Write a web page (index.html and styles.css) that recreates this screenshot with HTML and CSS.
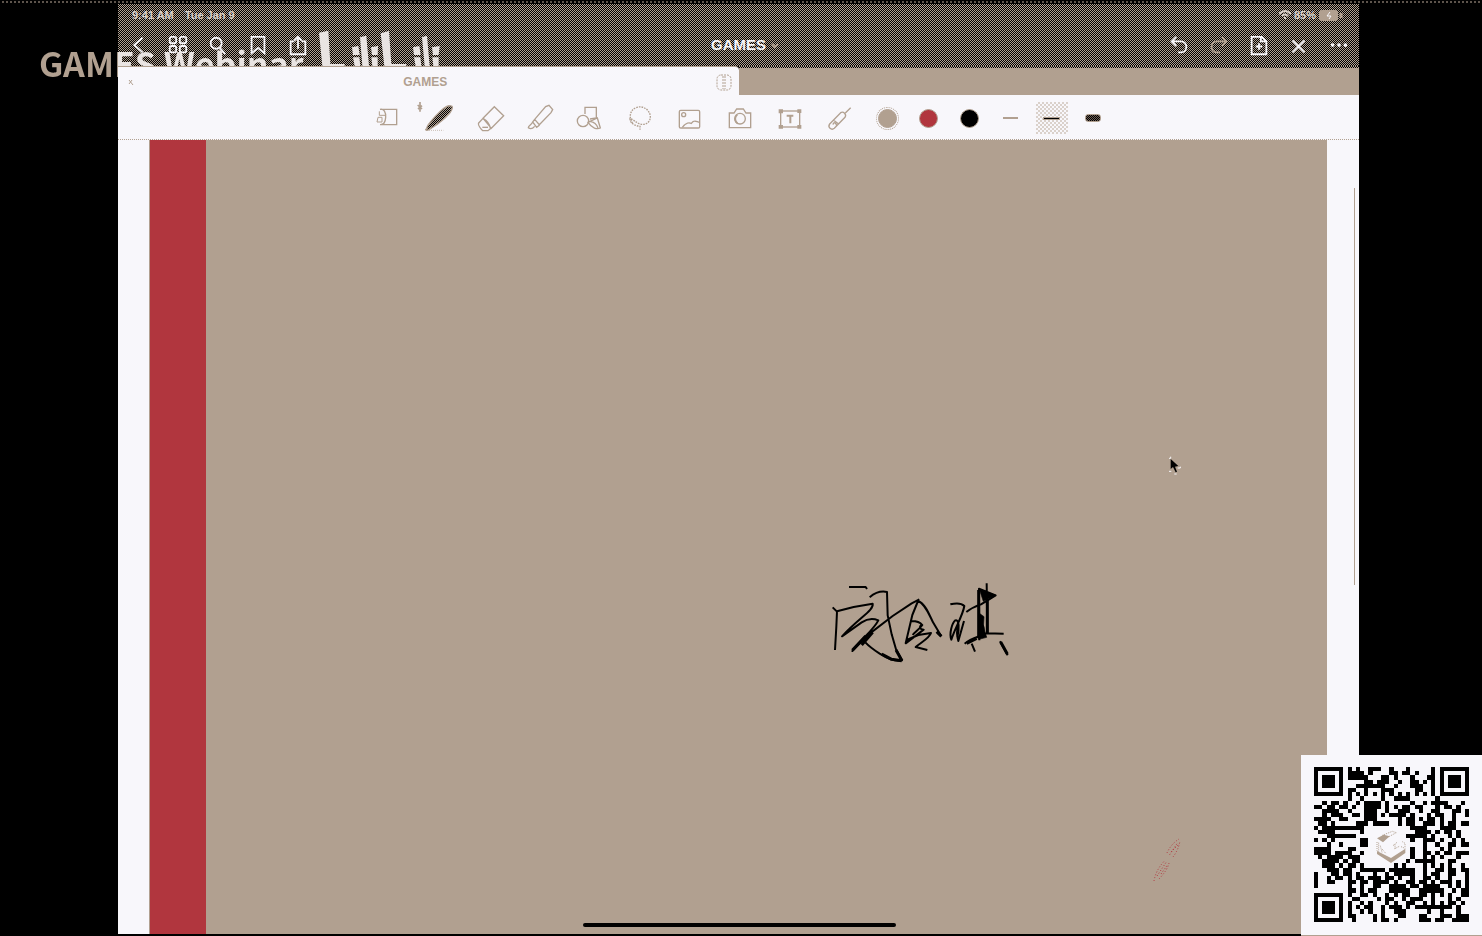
FILE: index.html
```html
<!DOCTYPE html>
<html lang="en">
<head>
<meta charset="utf-8">
<title>GAMES</title>
<link rel="stylesheet" href="styles.css">
</head>
<body>
<div class="screen">
  <main class="tablet">
    <header class="top">
      <div class="status">
        <span class="clock">9:41 AM</span><span>Tue Jan 9</span>
        <span class="power">
          <svg width="12" height="10" viewBox="0 0 12 10" fill="none" stroke="currentColor" stroke-width="2"><path d="M0 4Q6-2 12 4M3 6Q6 3 9 6M6 7v2"/></svg>
          <span>85%</span>
          <svg width="26" height="11" viewBox="0 0 26 11"><rect width="19" height="11" rx="3" fill="#b1a090"/><path d="M22 3v5" stroke="#b1a090" stroke-width="3"/><path d="M11 2l-3 4h4l-2 3" fill="none" stroke="#f8f7fb"/></svg>
        </span>
      </div>
      <nav class="nav">
        <div class="group">
          <button aria-label="Back"><svg viewBox="0 0 24 24"><path d="M17 3L8 11l9 8"/></svg></button>
          <button aria-label="Thumbnails"><svg viewBox="0 0 24 24"><rect x="3" y="2" width="7" height="7" rx="2"/><rect x="14" y="2" width="7" height="7" rx="2"/><rect x="3" y="12" width="7" height="7" rx="2"/><rect x="14" y="12" width="7" height="7" rx="2"/></svg></button>
          <button aria-label="Search"><svg viewBox="0 0 24 24"><circle cx="10" cy="9" r="6"/><path d="M14 14l6 7"/></svg></button>
          <button aria-label="Bookmark"><svg viewBox="0 0 24 24"><path d="M5 2h14v18l-7-6-7 6z"/></svg></button>
          <button aria-label="Share"><svg viewBox="0 0 24 24"><path d="M8 7H4v14h16V7h-4M12 15V2M8 6l4-4 4 4"/></svg></button>
        </div>
        <button class="title">GAMES<svg viewBox="0 0 10 10"><path d="M2 4l3 3 3-3"/></svg></button>
        <div class="group">
          <button aria-label="Undo"><svg viewBox="0 0 24 24"><path d="M9 2L4 7l5 5M4 7h10c8 0 8 12 0 12h-3"/></svg></button>
          <button class="dim" aria-label="Redo"><svg viewBox="0 0 24 24"><path d="M15 2l5 5-5 5M20 7H10c-8 0-8 12-1 12h4"/></svg></button>
          <button aria-label="Add page"><svg viewBox="0 0 24 24"><path d="M4 2h11l5 5v14H4zM14 2v5h6M12 9v7M8.500 12.500h7"/></svg></button>
          <button aria-label="Close editing"><svg viewBox="0 0 24 24"><path d="M5 6l13 13M18 6L5 19"/></svg></button>
          <button aria-label="More"><svg viewBox="0 0 24 24"><g fill="currentColor" stroke="none"><circle cx="5" cy="11" r="2"/><circle cx="12" cy="11" r="2"/><circle cx="19" cy="11" r="2"/></g></svg></button>
        </div>
      </nav>
    </header>
    <div class="tabs">
      <div class="tab">
        <button class="close" aria-label="Close tab"><svg width="6" height="8" viewBox="0 0 6 8"><path d="M1 2l4 5M4 2L1 6"/></svg></button>
        <span>GAMES</span>
        <button class="split" aria-label="Split view"><svg width="16" height="17" viewBox="0 0 16 17"><rect x="1" y="1" width="14" height="15" rx="4" stroke-dasharray="2 1"/><path d="M7 2v13M9 2v13" stroke-dasharray="2 1"/></svg></button>
      </div>
      <div class="shade"></div>
    </div>
    <div class="tools">
      <button aria-label="Zoom window"><svg viewBox="39 111 90 90"><path d="M60 130h50v46H64M60 130c12-3 18 9 17 24s-6 23-17 22"/><path d="M58 136v12h18M54 154h12v14H51z" stroke-width="3"/></svg></button>
      <button aria-label="Pen"><svg viewBox="189 111 90 90"><path d="M200 190c0-7 5-15 12-23 12-14 34-38 47-45 8-4 19-4 18 3-1 8-11 21-21 30-11 10-35 28-48 35-6 4-11 4-11 0z" fill="url(#ink)"/><path d="M207 193h43" stroke-dasharray="3 3" stroke-width="2"/><path d="M180 108v29M173 117l13 12M186 119l-12 10" stroke-width="5"/></svg></button>
      <button aria-label="Eraser"><svg viewBox="339 111 90 90"><path d="M369 157l34-35 28 27-37 38zM369 157l-13 14c-3 4 1 10 8 19l4 4h16l10-8M369 157c12 7 20 15 22 30"/><path d="M367 184h17" /></svg></button>
      <button aria-label="Highlighter"><svg viewBox="489 111 90 90"><path d="M524 160l33-38 10-4 11 13-5 9-35 36zM524 160l-6 8 12 16 9-7M517 170c-5 8-12 9-12 15 5 4 13 3 19-4"/></svg></button>
      <button aria-label="Shapes"><svg viewBox="639 111 90 90"><path d="M675 144v-20h34v32l-19 3"/><circle cx="669" cy="165" r="17"/><path d="M684 169l28-13 9 30c-10 5-25 1-37-17zM690 166c12 2 20 8 24 20"/></svg></button>
      <button aria-label="Lasso"><svg viewBox="69 111 90 90"><path d="M98 172c-12-16-9-40 10-47 20-8 42 6 43 27 1 16-15 27-31 22-13-5-20-14-30-16 0 15 17 22 30 23v10" stroke-dasharray="5 3"/></svg></button>
      <button aria-label="Image"><svg viewBox="219 111 90 90"><rect x="238" y="133" width="61" height="53" rx="4"/><circle cx="251" cy="146" r="6"/><path d="M247 184c12-15 19-15 27-12 10-14 17-3 25-3"/></svg></button>
      <button aria-label="Camera"><svg viewBox="369 111 90 90"><path d="M388 141h14l8-12h20l8 12h14v44h-64z"/><circle cx="420" cy="158" r="16"/><path d="M412 146c-9 8-8 19 1 27" stroke-width="5"/></svg></button>
      <button aria-label="Text"><svg viewBox="519 111 90 90"><rect x="542" y="135" width="57" height="48"/><path d="M538 132h9v8h-9zM594 132h8v7h-8zM538 179h9v7h-9zM594 179h8v7h-8z" fill="currentColor"/><path d="M560 149h20M571 149v23" stroke-width="6"/></svg></button>
      <button aria-label="Laser pointer"><svg viewBox="669 111 90 90"><path d="M752 125l-16 16M689 174l33-34c8-5 19 5 13 14l-32 33c-9 7-21-3-14-13zM700 162l17 13M699 176c2-9 9-7 11 3"/></svg></button>
      <div class="swatches">
        <button aria-label="Tan"><span class="ring"><i class="dot tan"></i></span></button>
        <button aria-label="Red"><i class="dot red"></i></button>
        <button aria-label="Black"><i class="dot black"></i></button>
        <button aria-label="Thin"><i class="line"></i></button>
        <button aria-label="Medium"><span class="picked"><i class="line mid"></i></span></button>
        <button aria-label="Thick"><i class="line thick"></i></button>
      </div>
    </div>
    <div class="desk">
      <div class="paper">
        <div class="margin"></div>
        <svg class="ink" viewBox="0 0 600 330" aria-label="Handwriting">
          <g id="strokes">
            <path d="M87 51h50l4 6M38 112l13 13-2 45-4 70M51 124l50-13 57-10c4 20-38 40-92 98l59-42c18-12 38-11 50-6-14 28-45 50-78 92l49-50 72-55 57-38 23-12M149 82c14-12 33-20 52-16l2 70 12 57 13 45 18 33c-20 6-48-8-67-20-18-12-30-20-43-34"/>
            <path d="M294 93l-17 42-20 85 54-41c-13-2-15-7-7-15M294 93c22 8 34 42 45 64l25 42M275 153c14 0 25 3 32 12-8 12-22 21-29 30M260 210l35-15 38-6c-5 16-30 28-46 42l35 9"/>
            <path d="M391 103c12-3 32-5 42 5-5 30-28 65-39 101-7-18 2-50 12-58 12-5 12 28 6 52M432 153l-17 60c-5-15-4-37 1-53M439 126c15-12 29-18 44-23l44-27-50-20 1 155M500 40l2 150M480 170c8-10 14 0 9 20M434 221c20-18 42-20 65-31l52 1M455 221l10 24M540 214l23 42"/>
            <path d="M478 58l50 18-38 18zM478 130l14 10-2 30 10 32-24 6z" fill="#000" stroke-width="2"/>
            <path d="M97 241l40-43M125 225l33-38M476 60v145M502 90v100M440 220l30-15M542 216l20 36M350 185l14 14M228 240l18 32M185 252l30 16 30 4" stroke-width="9"/>
          </g>
        </svg>
        <svg class="cursor" viewBox="0 0 36 60"><path d="M5 9v30l7-6 8 16 4-2-6-15 10-2z" fill="#000"/><path d="M0 7h5V2M26 36h8v-4M0 46h7M16 54h7" stroke="#f8f7fb" stroke-width="3" fill="none"/></svg>
        <svg class="trace" viewBox="0 0 84 132"><g fill="none" stroke="#b1363e" stroke-width="3" stroke-dasharray="3 6"><path d="M3 129Q8 96 36 67M18 123Q43 97 48 75M12 114L40 72M24 108L44 80"/><path d="M42 45Q54 18 78 3M60 57Q76 36 81 9M50 50L74 14M54 42L76 20"/></g></svg>
        <div class="home"></div>
      </div>
      <div class="scroll"></div>
    </div>
  </main>
  <div class="brand">
    <span class="words">GAMES Webinar</span>
    <svg width="123" height="36" viewBox="0 0 369 108" aria-label="bilibili" fill="#e9e4e2">
      <path d="M0 8L28 2l6 100h43v6H10zM99 52l19-4 4 27h-20zM102 82h19l3 26h-17zM123 22l19-5 8 91h-20zM156 52l21-4-1 27h-17zM157 82h19v26h-16z"/>
      <path d="M185 10l25-7 7 99h45v6h-66zM282 52l19-4 4 27h-20zM285 82h19l3 26h-17zM309 22l15-5 8 91h-15zM339 52l23-4-3 27h-17zM340 82h19v26h-16z"/>
    </svg>
  </div>
  <aside class="card"><svg id="code" viewBox="0 0 37 37" role="img" aria-label="QR code" shape-rendering="crispEdges"></svg>
    <svg class="logo" viewBox="0 0 108 114"><g fill="#b1a090"><path d="M12 40l20-11 18 5-20 18zM12 78l42 21 43-28v13l-43 30-42-27z"/></g><path d="M28 31l30-12 12 4-28 15M12 51v26M17 53v28M22 62l5 20M27 72l12 14M60 62l12-10M65 71l14-7M88 50l8 5v16M84 65l10 4M66 58v14" fill="none" stroke="#b1a090" stroke-width="3" stroke-dasharray="3 3"/></svg>
  </aside>
</div>
<svg class="defs" width="0" height="0"><defs><pattern id="ink" width="6" height="6" patternUnits="userSpaceOnUse"><rect width="6" height="6" fill="#b1a090"/><path d="M0 0h3v3h-3zM3 3h3v3h-3z" fill="#000"/></pattern></defs></svg>
<script src="code.js"></script>
</body>
</html>
```
FILE: styles.css
```css
:root { --tan: #b1a090; --red: #b1363e; --white: #f8f7fb; }
* { box-sizing: border-box; }
body { margin: 0; background: #000; color: var(--tan); font-family: "Liberation Sans", Arial, sans-serif; }
button { margin: 0; padding: 0; border: 0; background: none; color: inherit; font: inherit; display: flex; align-items: center; justify-content: center; }
.screen { position: relative; min-height: 100vh; padding: 0 123px 2px 118px; display: flex; overflow: hidden; }
.screen::before { content: ""; position: absolute; z-index: 4; top: 1px; left: 0; right: 0; height: 2px; background: repeating-linear-gradient(90deg, #000 0 2px, #5d544c 2px 4px); }
.tablet { flex: 1; min-width: 0; display: flex; flex-direction: column; }
.top, .shade { background: repeating-conic-gradient(#000 0 25%, var(--tan) 0 50%) 0 0 / 2px 2px; }
.top { height: 66px; border-top: 4px solid #000; color: var(--white); }
.status { height: 22px; padding: 0 14px; display: flex; align-items: center; gap: 11px; font-size: 11px; font-weight: bold; color: #d8cfc8; }
.power { margin-left: auto; display: flex; align-items: center; gap: 3px; color: #d8cfc8; }
.nav { height: 40px; display: grid; grid-template-columns: 1fr auto 1fr; align-items: center; }
.group { display: flex; }
.group:last-child { justify-content: flex-end; }
.group button { width: 40px; height: 32px; }
.nav svg { width: 22px; height: 22px; fill: none; stroke: currentColor; stroke-width: 2; }
.nav .title { font-size: 15px; line-height: 16px; font-weight: bold; padding: 0 0 2px 14px; gap: 4px; }
.nav .title svg { width: 10px; height: 10px; stroke: var(--tan); }
.group .dim { color: var(--tan); }
.tabs { display: flex; height: 29px; position: relative; z-index: 2; }
.tab { flex: 0 0 50%; background: var(--white); border-top: 1px solid var(--tan); border-radius: 0 4px 0 0; display: flex; align-items: center; justify-content: space-between; padding: 2px 6px 0 10px; font-size: 12px; font-weight: bold; }
.tab svg { display: block; fill: none; stroke: var(--tan); }
.shade { flex: 1; }
.shade::after { content: ""; display: block; margin-top: 2px; height: 27px; background: var(--tan); }
.tools { height: 45px; position: relative; z-index: 2; background: var(--white); display: flex; justify-content: center; align-items: center; padding: 2px 1px 0 0; border-bottom: 1px dotted var(--tan); }
.tools > button { width: 50px; height: 40px; }
.tools svg { width: 30px; height: 30px; overflow: visible; fill: none; stroke: var(--tan); stroke-width: 4; }
.swatches { display: flex; margin-left: 4px; }
.swatches button { width: 41px; height: 40px; }
.dot { width: 19px; height: 19px; border-radius: 50%; border: 1px solid var(--tan); }
.tan { background: var(--tan); }
.red { background: var(--red); }
.black { background: #000; }
.ring { padding: 1px; border: 1px dotted var(--tan); border-radius: 50%; display: flex; }
.line { width: 15px; height: 2px; background: var(--tan); }
.mid { height: 3px; width: 17px; border: 1px solid var(--tan); background: #000; }
.thick { height: 8px; width: 16px; border-radius: 3px; border: 1px solid var(--tan); background: repeating-conic-gradient(#000 0 25%, #6c5d54 0 50%) 0 0 / 2px 2px; }
.picked { width: 32px; height: 32px; display: flex; align-items: center; justify-content: center; background: repeating-conic-gradient(#dad1cb 0 25%, var(--white) 0 50%) 0 0 / 4px 4px; }
.desk { flex: 1; position: relative; background: var(--white); padding: 0 32px 0 31px; display: flex; }
.paper { flex: 1; position: relative; display: flex; background: var(--tan); }
.margin { width: 57px; background: var(--red); border-left: 1px solid var(--tan); }
.ink, .cursor, .trace, .home { position: absolute; }
.ink { left: 57%; top: 54.100%; width: 200px; height: 110px; fill: none; stroke: #000; stroke-width: 6; stroke-linejoin: round; }
.cursor { left: 86.600%; top: 39.800%; width: 12px; height: 20px; }
.trace { left: 85.200%; top: 87.900%; width: 28px; height: 44px; }
.home { left: 36.800%; bottom: 7px; width: 26.600%; height: 4px; border-radius: 2px; background: #000; }
.scroll { position: absolute; right: 4px; top: 6%; height: 50%; width: 1px; background: var(--tan); }
.brand { position: absolute; z-index: 1; left: 39px; top: 30px; display: flex; gap: 15px; align-items: flex-start; }
.words { font: bold 34px/48px "Noto Sans CJK SC", sans-serif; padding-top: 9px; background: linear-gradient(90deg, var(--tan) 79px, #e9e4e2 79px); background-clip: text; -webkit-background-clip: text; color: transparent; white-space: nowrap; }
.card { position: absolute; z-index: 3; right: 0; bottom: 0; width: 181px; height: 181px; padding: 12px 13px; background: var(--white); border-bottom: 1px solid var(--tan); }
.card > svg:first-child { display: block; width: 155px; height: 155px; }
.card .logo { position: absolute; left: 72px; top: 70px; width: 36px; height: 38px; }
.defs { position: absolute; }
```
FILE: code.js
```
const rows = [
  "1111111.1.1..111..1...1.....1.1111111",
  "1.....1.1111.1....11.11.1...1.1.....1",
  "1.111.1.11111...11.1...1...11.1.111.1",
  "1.111.1.....11.111..1..11.1.1.1.111.1",
  "1.111.1...1111111..1...111..1.1.111.1",
  "1.....1.11..1...111.....11..1.1.....1",
  "1111111.1.1.1.1.1.1.1.1.1.1.1.1111111",
  "........1..1....1..1111......1.......",
  "..1.11.1..1.1111.1.....1..1.1111...1.",
  "11.11.11.1..1111.1.1.11.11...1.11.1..",
  "..1111..1...111..1..111..1..11...11.1",
  "..1.111..11.111.1.1111.1...1.11..1..1",
  "1111..11....111.....1.11.1.11.1..1...",
  ".11.1.....111.1111..1.11..111.1.11.11",
  "1.1111111111...........1111...1111...",
  ".1111......1............1111.1.11.1..",
  "...1111111............11111.1...1.1..",
  "1.1.1......11..........1..111.1..1.1.",
  "...1..1....11.............1..1..11.11",
  "1111....11.............1..1...1.1....",
  "1111.1111..1...........1..11.1.11.111",
  ".1.1111.111............1..1.1.1...1..",
  "..1111.1.11...........1.11111...11...",
  "..111.1.11.1.......1.1....1.1.1.1..1.",
  "...111.11..111111.111111..1..11.11.11",
  "1...11.11.1...1..1.11111..1.11..11..1",
  "1..1.11.1.11.111.11.1..1..11.1..1...1",
  "1..11...11.11.1111.1..11.11.1.111.1.1",
  "1.......1..1..11..1111.11.1111..1.1.1",
  "........11.1.11...11111..111111..1.11",
  "1111111.1..11.1..1.1.11..11.1.1.1..11",
  "1.....1..11....1.11..1.111..1...1.1..",
  "1.111.1.1..1.1...1.1..11..1.1.1.11.1.",
  "1.111.1.1.1.11..1.111.1.111111111.1..",
  "1.111.1.1..1.1..1..111.....1..1...1..",
  "1.....1.11....1.1...11...11...111.111",
  "1111111..1....1.11.1.....111.11..1111"
];
const code = document.getElementById("code");
const path = document.createElementNS("http://www.w3.org/2000/svg", "path");
path.setAttribute("d", rows.map((row, y) =>
  [...row].map((cell, x) => cell === "1" ? `M${x} ${y}h1v1h-1z` : "").join("")).join(""));
code.append(path);
```
